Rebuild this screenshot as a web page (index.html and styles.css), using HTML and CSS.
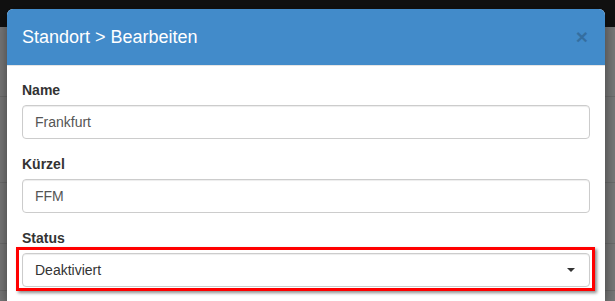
FILE: index.html
```html
<!DOCTYPE html>
<html lang="de">
<head>
<meta charset="utf-8">
<title>Standort bearbeiten</title>
<link rel="stylesheet" href="styles.css">
</head>
<body>
<div class="page">
  <div class="navbar"></div>
  <div class="bg-rows">
    <div class="bg-row r1"></div>
    <div class="bg-row r2"></div>
    <div class="bg-row r3"><span class="bg-text">Frankfurt am Main Burg</span></div>
    <div class="bg-row r4"></div>
  </div>
</div>
<div class="modal">
  <div class="modal-header">
    <h4 class="modal-title">Standort &gt; Bearbeiten</h4>
    <span class="close">&times;</span>
  </div>
  <div class="modal-body">
    <div class="form-group">
      <label class="label">Name</label>
      <div class="form-control">Frankfurt</div>
    </div>
    <div class="form-group">
      <label class="label">Kürzel</label>
      <div class="form-control">FFM</div>
    </div>
    <div class="form-group">
      <label class="label">Status</label>
      <div class="highlight-wrap">
        <div class="form-control select">
          <span>Deaktiviert</span>
          <span class="caret"></span>
        </div>
        <div class="highlight"></div>
      </div>
    </div>
  </div>
</div>
</body>
</html>
```
FILE: styles.css
```css
html, body {
  margin: 0;
  padding: 0;
  width: 615px;
  height: 301px;
  overflow: hidden;
  font-family: "Liberation Sans", Arial, sans-serif;
  background: #7b7b7b;
}

.page {
  width: 615px;
  height: 301px;
  overflow: hidden;
}

.navbar {
  height: 27px;
  background: #111111;
}

.bg-rows {
  display: flex;
  flex-direction: column;
}

.bg-row {
  border-bottom: 1px solid #6e6e6e;
}

.r1 { height: 69px; }
.r2 { height: 85px; }
.r3 { height: 60px; overflow: hidden; }
.r4 { height: 46px; }

.bg-text {
  display: block;
  margin-left: -150px;
  padding-top: 17px;
  font-size: 14px;
  color: #2e2e2e;
  white-space: nowrap;
}

.modal {
  position: absolute;
  left: 7px;
  top: 9px;
  width: 598px;
  height: 292px;
  background: #ffffff;
  border-radius: 6px 6px 0 0;
  box-shadow: 0 5px 15px rgba(0, 0, 0, 0.5);
  overflow: hidden;
}

.modal-header {
  display: flex;
  align-items: center;
  justify-content: space-between;
  padding: 0 15px;
  background: #428bca;
  border-bottom: 1px solid #e5e5e5;
  box-sizing: border-box;
  height: 57px;
}

.modal-title {
  margin: 0;
  font-size: 18px;
  font-weight: normal;
  color: #ffffff;
  line-height: 26px;
}

.close {
  font-size: 21px;
  font-weight: bold;
  line-height: 1;
  color: #000000;
  opacity: 0.2;
  margin-right: 2px;
  margin-top: -2px;
}

.modal-body {
  padding: 14px 15px 0;
}

.form-group {
  display: flex;
  flex-direction: column;
  margin-bottom: 15px;
}

.label {
  font-size: 14px;
  font-weight: bold;
  color: #333333;
  line-height: 20px;
  margin-bottom: 5px;
}

.form-control {
  height: 34px;
  box-sizing: border-box;
  padding: 6px 12px;
  font-size: 14px;
  line-height: 20px;
  color: #555555;
  background: #ffffff;
  border: 1px solid #cccccc;
  border-radius: 4px;
  box-shadow: inset 0 1px 1px rgba(0, 0, 0, 0.075);
}

.select {
  display: flex;
  align-items: center;
  justify-content: space-between;
  color: #333333;
}

.caret {
  width: 0;
  height: 0;
  border-left: 4px solid transparent;
  border-right: 4px solid transparent;
  border-top: 4px solid #333333;
  margin-right: 2px;
}

.highlight-wrap {
  position: relative;
}

.highlight {
  position: absolute;
  left: -6px;
  right: -5px;
  top: -6px;
  bottom: -4px;
  border: 3px solid #ff0000;
  box-shadow: 2px 2px 3px rgba(0, 0, 0, 0.45);
  pointer-events: none;
}
```
